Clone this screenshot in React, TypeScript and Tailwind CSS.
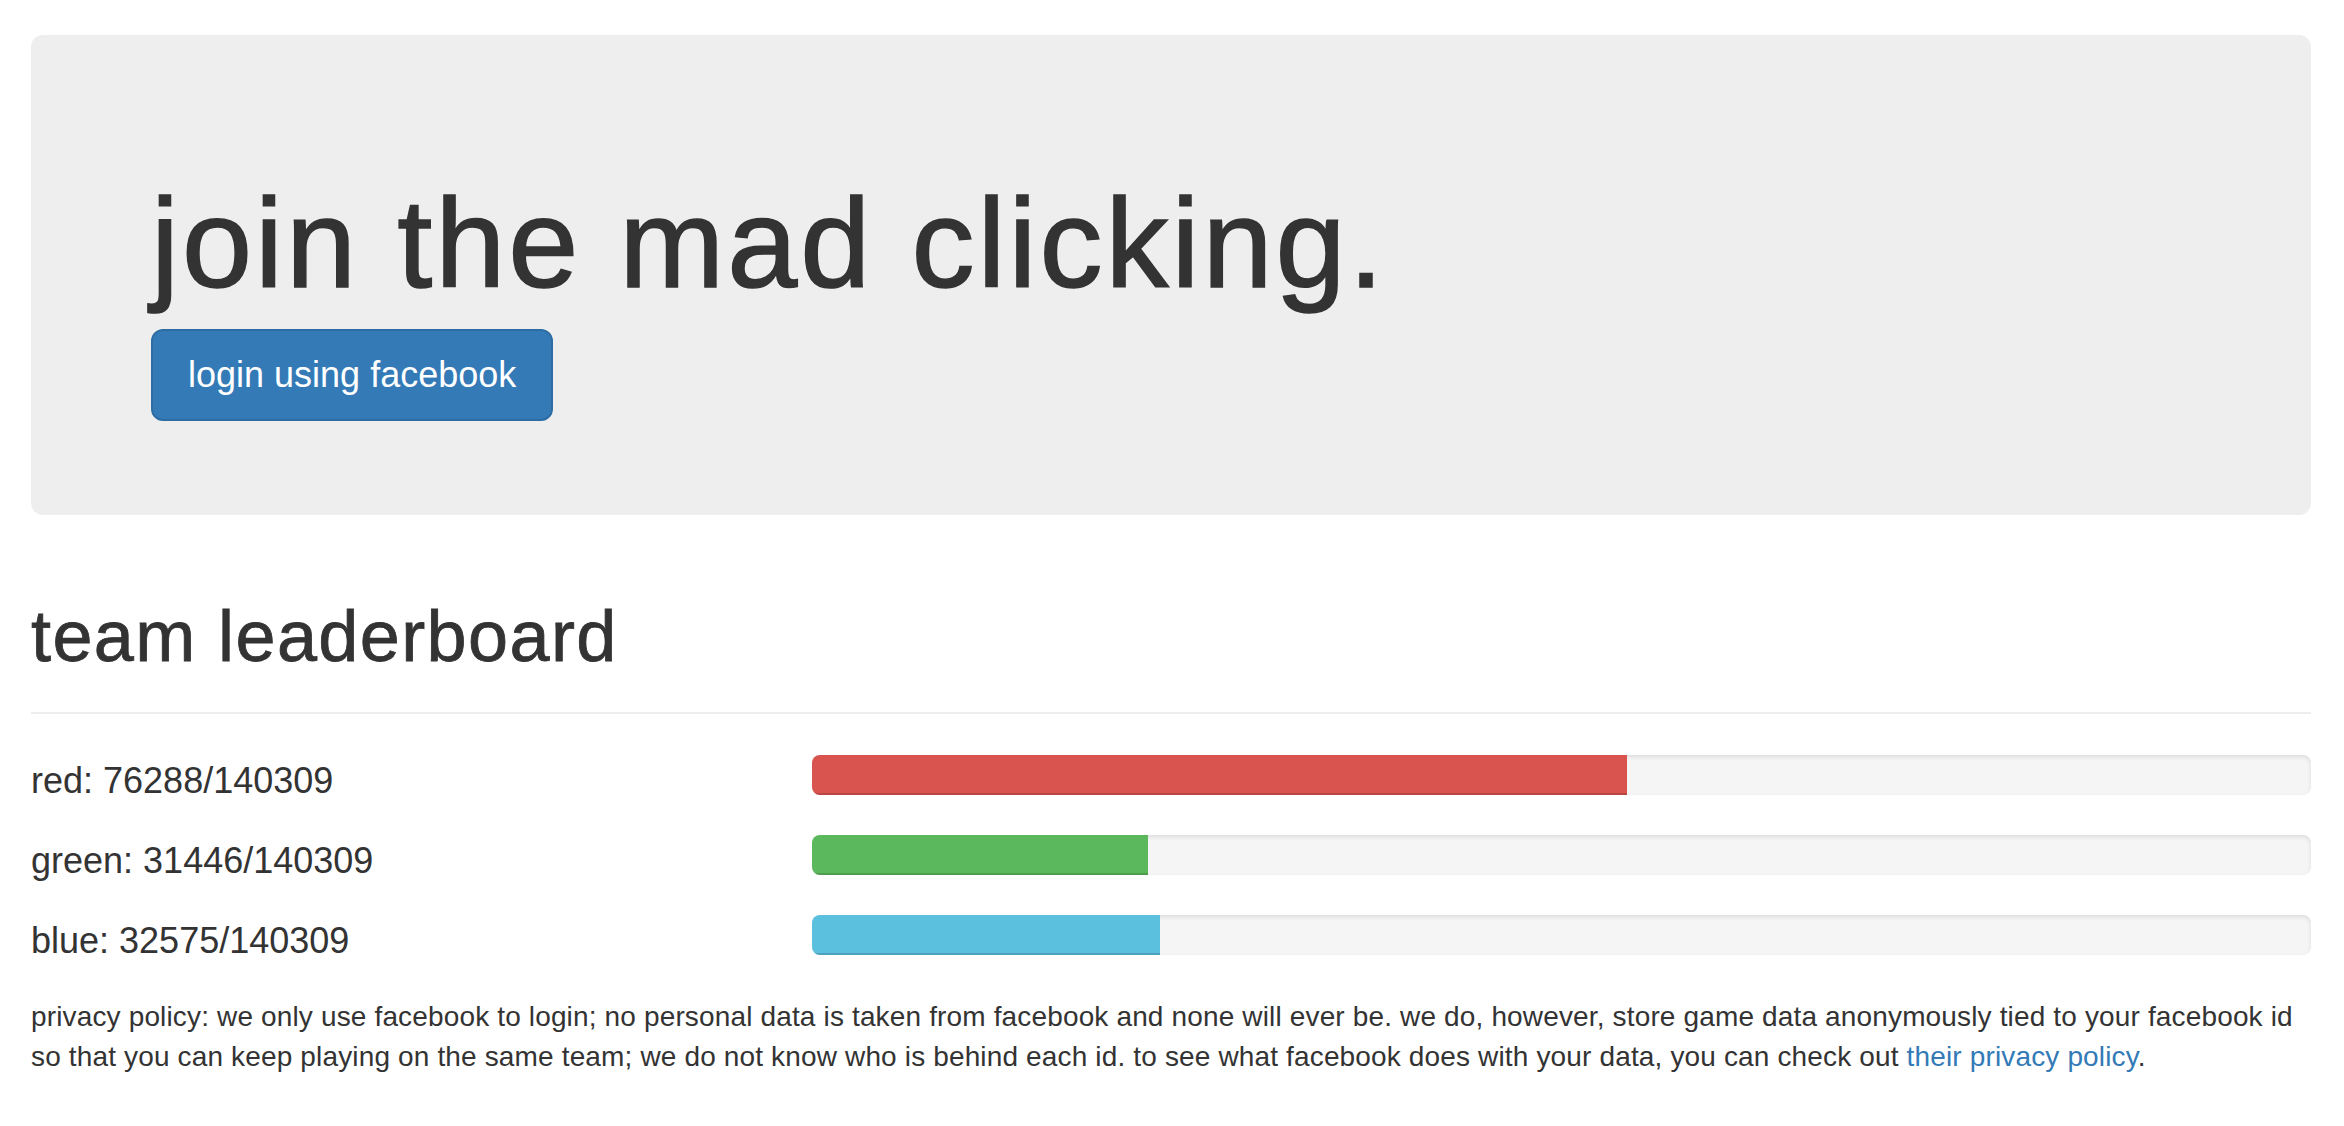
import React from "react";

const TOTAL = 140309;
const teams = [
  { name: "red", score: 76288, color: "bg-[#d9534f]" },
  { name: "green", score: 31446, color: "bg-[#5cb85c]" },
  { name: "blue", score: 32575, color: "bg-[#5bc0de]" },
];

export default function App() {
  return (
    <div className="min-h-screen bg-white text-[#333] [font-family:'Liberation_Sans',Arial,Helvetica,sans-serif] pl-[31px] pr-[33px] pt-[35px]">
      <div className="bg-[#eeeeee] rounded-[12px] px-[120px] pt-[96px] pb-[94px]">
        <h1 className="text-[126px] leading-[139px] font-normal tracking-[3px] mt-[43px] mb-[16px] [-webkit-text-stroke:1.5px_#333]">
          join the mad clicking.
        </h1>
        <button
          type="button"
          className="bg-[#337ab7] border-2 border-[#2e6da4] rounded-[12px] text-white text-[36px] leading-[48px] px-[35px] py-[20px]"
        >
          login using facebook
        </button>
      </div>

      <div className="mt-[82px] border-b-2 border-[#eeeeee] pb-[36px] mb-[41px]">
        <h1 className="text-[72px] leading-[79px] font-normal tracking-[1.4px] [-webkit-text-stroke:0.8px_#333]">
          team leaderboard
        </h1>
      </div>

      <div className="flex flex-col">
        {teams.map((t) => (
          <div key={t.name} className="flex h-[80px]">
            <div className="w-[781px] shrink-0 text-[36px] leading-[51px]">
              {t.name}: {t.score}/{TOTAL}
            </div>
            <div className="flex-1">
              <div className="h-[40px] rounded-[8px] bg-[#f5f5f5] overflow-hidden shadow-[inset_0_2px_4px_rgba(0,0,0,0.1)]">
                <div
                  className={`h-full ${t.color} shadow-[inset_0_-2px_0_rgba(0,0,0,0.15)]`}
                  style={{ width: `${(t.score / TOTAL) * 100}%` }}
                />
              </div>
            </div>
          </div>
        ))}
      </div>

      <p className="mt-[2px] text-[28px] leading-[40px] tracking-[0.15px]">
        privacy policy: we only use facebook to login; no personal data is taken from facebook and none will ever be. we do,
        however, store game data anonymously tied to your facebook id so that you can keep playing on the same team; we do
        not know who is behind each id. to see what facebook does with your data, you can check out{" "}
        <a href="#" className="text-[#337ab7]">
          their privacy policy
        </a>
        .
      </p>
    </div>
  );
}
